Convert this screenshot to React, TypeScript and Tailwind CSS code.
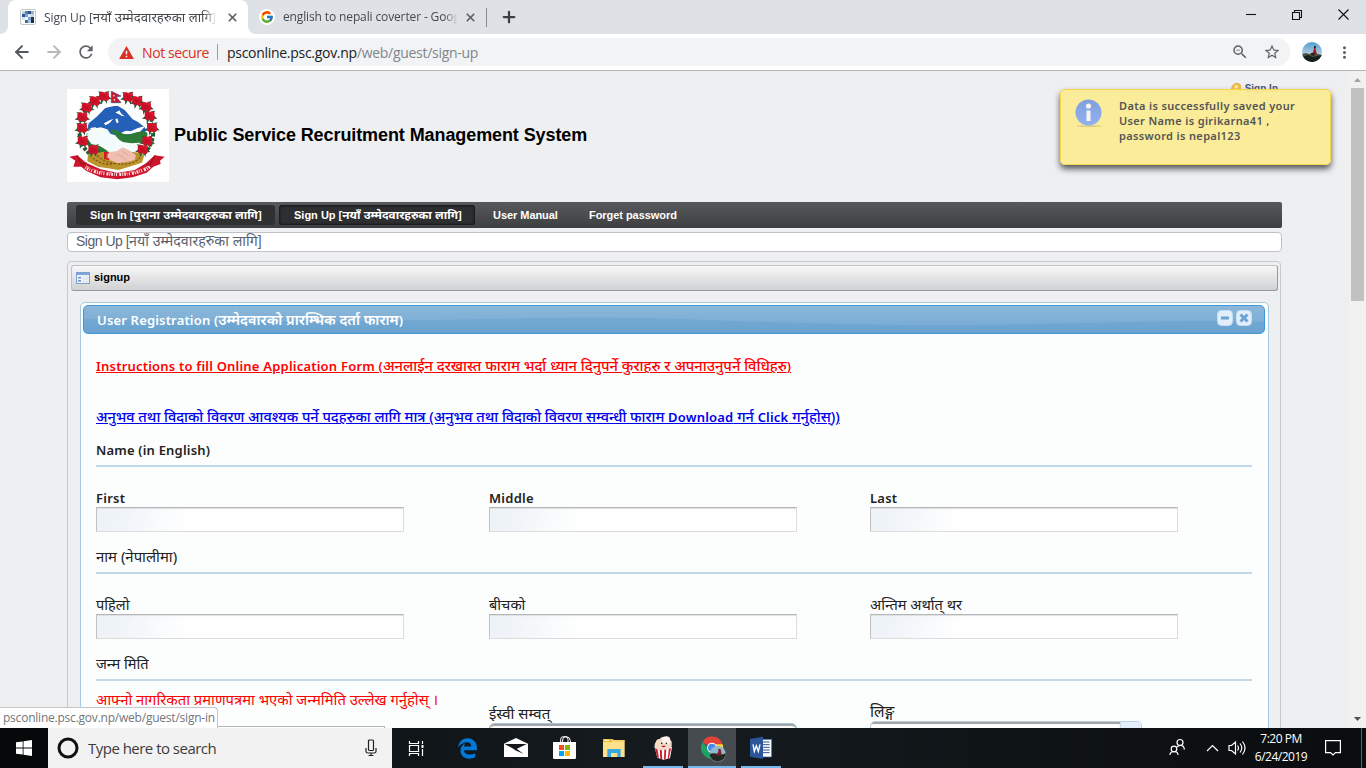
import type { ReactNode } from 'react';
import { ArrowLeft, ArrowRight, Plus, X } from 'lucide-react';
import { FcGoogle } from 'react-icons/fc';
import { FaEdgeLegacy } from 'react-icons/fa6';
import { MdRefresh, MdStarBorder, MdZoomOut, MdMoreVert } from 'react-icons/md';

const ui = "font-['Open_Sans','Noto_Sans',sans-serif]";
const arial = "font-['Liberation_Sans','Noto_Sans',sans-serif]";
const lucida = "font-['Noto_Sans','Noto_Sans_Devanagari',sans-serif]";

function Avatar({ className }: { className: string }) {
  return (
    <svg viewBox="0 0 20 20" className={className}>
      <defs>
        <linearGradient id="sky" x1="0" y1="0" x2="0" y2="1">
          <stop offset="0" stopColor="#4f9fd0" />
          <stop offset=".55" stopColor="#a9c9dc" />
        </linearGradient>
        <clipPath id="round"><circle cx="10" cy="10" r="10" /></clipPath>
      </defs>
      <g clipPath="url(#round)">
        <rect width="20" height="20" fill="url(#sky)" />
        <path d="M0 12l4-1 3 1 4-1 5 1 4 1v8H0z" fill="#4c5240" />
        <path d="M0 15l6-2 5 2 9-2v8H0z" fill="#16201f" />
        <path d="M12 5l1.500 1 .6 3 1 3-3 .5-2-1 1.500-3z" fill="#a31e2e" />
        <path d="M12 4h1.800v2H12zM9 11l4 0-1 3-3-1z" fill="#2a1d22" />
      </g>
    </svg>
  );
}

function TabStrip() {
  return (
    <div className="flex h-[34px] bg-[#dee1e6]">
      <div className="flex w-2 items-end bg-white"><div className="h-[34px] w-2 rounded-br-lg bg-[#dee1e6]" /></div>
      <div className="flex h-[34px] w-[240px] items-center rounded-t-lg bg-white pl-3">
        <svg viewBox="0 0 16 16" className="size-4 shrink-0">
          <rect x=".5" y=".5" width="15" height="15" rx="1.5" fill="#fff" stroke="#c4c6c9" />
          <path d="M2 2h3v3H2z" fill="#bcd0e4" /><path d="M5 2h3v3H5z" fill="#4d80b4" /><path d="M8 2h3v3H8z" fill="#275282" /><path d="M11 2h3v3h-3z" fill="#8fb3d5" />
          <path d="M2 5h3v3H2z" fill="#275a90" /><path d="M5 5h3v3H5z" fill="#7aa5cf" /><path d="M8 5h3v3H8z" fill="#dce8f3" /><path d="M11 5h3v3h-3z" fill="#c3d6e9" />
          <path d="M2 8h3v3H2z" fill="#d4e2ef" /><path d="M5 8h3v3H5z" fill="#eef4f9" /><path d="M8 8h3v3H8z" fill="#78a3cb" /><path d="M11 8h3v3h-3z" fill="#24384f" />
          <path d="M5 11h3v3H5z" fill="#3c6ea3" /><path d="M8 11h3v3H8z" fill="#a8c4de" /><path d="M11 11h3v3h-3z" fill="#1d2b3c" />
        </svg>
        <span className={`${ui} ml-2 w-[173px] shrink-0 mask-r-from-92% text-[12px] leading-5 tracking-[-0.1px] whitespace-nowrap text-[#45494d]`}>Sign Up [<span className="text-[13.200px] tracking-normal">नयाँ उम्मेदवारहरुका लागि</span>]</span>
        <X className="ml-[9px] size-[13px] shrink-0 text-[#5f6368]" strokeWidth={3.2} />
      </div>
      <div className="flex w-2 bg-white"><div className="h-[34px] w-2 rounded-bl-lg bg-[#dee1e6]" /></div>
      <div className="flex items-center pl-[3px]">
        <div className="flex size-4 items-center justify-center rounded-full bg-white"><FcGoogle size={14} /></div>
        <span className={`${ui} ml-2 w-[175px] shrink-0 mask-r-from-92% text-[12px] leading-5 tracking-[-0.13px] whitespace-nowrap text-[#45494d]`}>english to nepali coverter - Goog</span>
        <X className="ml-[6px] size-[13px] text-[#5f6368]" strokeWidth={3.2} />
        <div className="ml-[9px] h-[19px] w-px bg-[#878b90]" />
        <Plus className="ml-[13px] size-[18px] text-[#3c4043]" strokeWidth={3} />
      </div>
      <svg viewBox="0 0 120 34" className="ml-auto mr-[8px] h-[34px] w-[120px]" fill="none" stroke="#111" strokeWidth="1.1">
        <path d="M8 14.500h10" />
        <path d="M54.500 12.500h7v7h-7zM56.500 12.500v-2h7v7h-2" />
        <path d="M100.500 9.500l10 10M110.500 9.500l-10 10" />
      </svg>
    </div>
  );
}

function Toolbar() {
  return (
    <div className="flex h-[37px] items-center border-b border-[#b6b4b6] bg-white pl-[12px]">
      <ArrowLeft className="size-5 text-[#55595e]" strokeWidth={2.4} />
      <ArrowRight className="ml-[12px] size-5 text-[#b8babc]" strokeWidth={2.4} />
      <MdRefresh className="ml-[12px] size-5 text-[#5f6368]" />
      <div className={`${ui} ml-[12px] flex h-7 w-[1182px] items-center rounded-full bg-[#f1f3f4] pl-[11px] text-[14px]`}>
        <svg viewBox="0 0 16 14" className="h-[13px] w-[15px]">
          <path d="M8 0l8 14H0z" fill="#d93025" />
          <path d="M7.200 5h1.600v4H7.200zM7.200 10.500h1.600V12H7.200z" fill="#fff" />
        </svg>
        <span className="ml-[8px] w-[67px] whitespace-nowrap tracking-[-0.4px] text-[#d93025]">Not secure</span>
        <span className="ml-[8px] h-4 w-px bg-[#9a9da1]" />
        <span className="ml-[9px] whitespace-nowrap tracking-[-0.29px] text-[#202124]">psconline.psc.gov.np<span className="text-[#80868b]">/web/guest/sign-up</span></span>
        <MdZoomOut className="ml-auto size-[18px] text-[#5f6368]" />
        <MdStarBorder className="mr-[9px] ml-[14px] size-[18px] text-[#5f6368]" />
      </div>
      <Avatar className="ml-[12px] size-5" />
      <MdMoreVert className="ml-[13px] size-[19px] text-[#5f6368]" />
    </div>
  );
}

const flowers = [
  [132, 48], [104, 62], [80, 81], [67, 110], [66, 143], [68, 182], [100, 208],
  [204, 50], [232, 62], [258, 79], [269, 107], [276, 142], [262, 182], [248, 207],
];

function Emblem() {
  return (
    <svg viewBox="21 27 306 279" className="h-[93px] w-[102px] shrink-0">
      <rect x="21" y="27" width="306" height="279" fill="#fff" />
      <path d="M138 46Q76 66 62 126t28 96M198 46q64 22 78 80t-26 96" fill="none" stroke="#1f5a35" strokeWidth="12" strokeDasharray="10 5" />
      <path d="M82 148l4-18 24-20 26-26 26-6 12 0 20 12 24 28 16 8 20 16 6 10-26 18-52 2-46-14-40-8z" fill="#245fb8" />
      <path d="M132 130l14-8 14-6-12 14-12 6zM166 98l12-7 6 10 10 8-10-2-8-5zM166 118l6-3 4 12-6 3zM184 158l14-6 14 2 22-10 22-6-20 22-28 2-20 2zM90 144l16-2 10 6-20 4z" fill="#fff" />
      <path d="M148 148l22 2 14 10 22 4 26-8 18-2 12 4 0 34-26 16-30-8-30-22z" fill="#2d7a38" />
      <path d="M80 160l10 0 26 36 34 16-20 8-32-6-20-24z" fill="#2d7a38" />
      <path d="M84 152l16-6 22-4 20 6 10 14 14 4 6 12 16 8 26 4 24-2 16 4 0 12-18 14-26-4-36 8-26-6-28-18-26-6-14-20z" fill="#f4fcfb" />
      <path d="M84 222l36-6 100 0 34 6-8 26-70 22-62-10-32-16z" fill="#b9952a" />
      <path d="M98 234q34 26 66 16M240 232q-24 28-76 18M112 226q20 22 48 22M228 226q-20 22-58 22" stroke="#8e5a1c" strokeWidth="4" strokeDasharray="7 4" fill="none" />
      <path d="M144 216l26-2 18-12 22 10 18 14-4 14-22 6-30 4-16-8-12-2z" fill="#f0bfb2" />
      <path d="M168 222l18 8 14 12M186 214l20 12" stroke="#cf9a8e" strokeWidth="2" fill="none" />
      <path d="M132 216h14v5h-6v14h8v6l-16-4z" fill="#d01b2a" />
      {flowers.map(([x, y]) => (
        <g key={`${x}-${y}`}>
          <path d={`M${x - 23} ${y + 9}l12-10 8 12zM${x + 23} ${y + 9}l-12-12-8 14zM${x - 8} ${y + 25}l-2-18 10 4zM${x + 9} ${y + 24}l0-18-9 4zM${x - 18} ${y - 14}l14 2-6 8zM${x + 17} ${y - 15}l-12 2 4 9z`} fill="#23613a" />
          <circle cx={x - 6} cy={y - 4} r="9" fill="#d3122a" />
          <circle cx={x + 7} cy={y - 5} r="8" fill="#da1a30" />
          <circle cx={x - 7} cy={y + 5} r="8" fill="#cb1028" />
          <circle cx={x + 6} cy={y + 6} r="9" fill="#d3122a" />
          <path d={`M${x - 7} ${y - 4}l7 4 6-5M${x - 5} ${y + 7}l6-4 5 5`} stroke="#8b101d" strokeWidth="1.500" fill="none" />
        </g>
      ))}
      <path d="M154 34l29 14-14 3 14 17h-29z" fill="#cf1832" stroke="#21477f" strokeWidth="2" />
      <path d="M159 44l6 3-4 3zM160 58l6 0-3 5z" fill="#fff" />
      <path d="M28 230l24-4 26 22 44 20 50 10 52-8 34-20 26-24 30 4-14 12 2 10-22 8-20 18-42 14-46 6-50-6-44-20-14-12-24 0 6-18z" fill="#cc152b" />
      <path d="M52 226l12 28 16-6M284 226l-14 30-12-6" fill="none" stroke="#85101e" strokeWidth="2.500" />
      <path d="M76 262q28 20 96 22 68-2 98-24" fill="none" stroke="#ffe6e6" strokeWidth="9" strokeDasharray="3 3 5 3 2 4 3 6 6 3" />
      <path d="M78 257q28 20 94 21 68-2 96-22" fill="none" stroke="#ffe6e6" strokeWidth="1.500" strokeDasharray="16 6" />
    </svg>
  );
}

function Header() {
  return (
    <div className="flex h-[131px] pt-[18px]">
      <Emblem />
      <h1 className={`${arial} mt-[34px] ml-[5px] text-[18px] font-bold leading-6 tracking-[-0.09px] text-black`}>Public Service Recruitment Management System</h1>
      <a className={`${arial} -mt-[10px] mr-[4px] ml-auto flex h-5 items-center gap-[4px] self-start text-[10px] font-bold leading-4 text-[#4b567d]`}>
        <svg viewBox="0 0 14 14" className="size-[15px]">
          <path d="M.5 13.500l.5-3.500 4.500-4a4.600 4.600 0 1 1 4 4.500l-4 1-1 2z" fill="#f3c34c" stroke="#d9a03c" strokeWidth=".8" />
          <circle cx="9.500" cy="4.500" r="1.500" fill="#fff0b8" />
        </svg>
        <span className="border-b border-dotted border-gray-500">Sign In</span>
      </a>
    </div>
  );
}

function Nav() {
  return (
    <nav className={`${arial} flex h-[26px] items-center rounded-[2px] bg-linear-to-b from-[#58595c] to-[#3e3f41] pl-[9px] text-[11px] font-bold text-white`}>
      <a className="flex h-5 w-[199px] items-center rounded-[3px] bg-[#2f3032] pl-[14px] leading-5 whitespace-nowrap"><span>Sign In [<span className="text-[11.800px]">पुराना उम्मेदवारहरुका लागि</span>]</span></a>
      <a className="ml-1 flex h-5 w-[196px] items-center rounded-[3px] bg-[#2d2e30] pl-[15px] leading-5 whitespace-nowrap shadow-[inset_0_0_3px_#000]"><span>Sign Up [<span className="text-[11.750px]">नयाँ उम्मेदवारहरुका लागि</span>]</span></a>
      <a className="ml-[18px] w-[96px] tracking-[-0.05px]">User Manual</a>
      <a className="tracking-[-0.05px]">Forget password</a>
    </nav>
  );
}

function Field({ label, latin }: { label: string; latin?: boolean }) {
  return (
    <label className="flex flex-col">
      <span className={latin ? 'h-[18px] text-[13px] font-semibold leading-[18px] tracking-[0.25px]' : 'h-[18px] text-[14.600px] leading-4 whitespace-nowrap'}>{label}</span>
      <input className="h-[25px] w-[308px] border border-[#dcdcdd] border-t-[#b5b5b8] border-l-[#c2c2c5] bg-linear-100 from-[#eef3f8] from-5% to-white to-30% shadow-[inset_0_2px_1px_-1px_#dedfe1]" />
    </label>
  );
}

function Columns({ children }: { children: ReactNode }) {
  return <div className="grid grid-cols-[393px_381px_1fr]">{children}</div>;
}

function Legend({ children, className }: { children: ReactNode; className: string }) {
  return <div className={`${className} border-b-2 border-[#c3d9ea]`}>{children}</div>;
}

function PanelButton({ d }: { d: string }) {
  return (
    <svg viewBox="0 0 16 16" className="size-4">
      <rect x=".5" y=".5" width="15" height="15" rx="4" fill="#e2eefa" stroke="#c5dff5" />
      <path d={d} stroke="#69a4d6" strokeWidth="3" fill="none" />
    </svg>
  );
}

function RegistrationPanel() {
  return (
    <section className={`${lucida} mt-[11px] mr-[11px] ml-[12px] h-[430px] rounded-t-[5px] border border-[#a6c9e2] bg-[#fcfdfd] p-[2px] pr-[3px] text-[#222]`}>
      <header className="relative flex h-[29px] items-center overflow-hidden rounded-[5px] border border-[#4297d7] bg-linear-to-b from-[#8cb7da] to-[#72a8d3] pr-[12px] pl-[13px]">
        <svg viewBox="0 0 1180 27" preserveAspectRatio="none" className="absolute inset-0 size-full">
          <path d="M0 13C180 18 330 14 470 12s230 8 400 7 210-6 310-3v12H0z" fill="#5c9ccc" opacity=".35" />
        </svg>
        <h2 className="relative text-[13px] font-semibold leading-5 tracking-[0.17px] whitespace-nowrap text-white">User Registration (<span className="text-[14.400px] tracking-normal">उम्मेदवारको प्रारम्भिक दर्ता फाराम</span>)</h2>
        <div className="relative -mt-[3px] ml-auto flex gap-[3px]">
          <PanelButton d="M4 8h8" />
          <PanelButton d="M4.500 4.500l7 7M11.500 4.500l-7 7" />
        </div>
      </header>
      <div className="mr-[13px] ml-[13px] pt-[21px]">
        <a className="block h-5 text-[13px] font-semibold leading-5 tracking-[0.21px] whitespace-nowrap text-[#f00] underline">Instructions to fill Online Application Form (<span className="text-[14.700px] font-medium tracking-normal">अनलाईन दरखास्त फाराम भर्दा ध्यान दिनुपर्ने कुराहरु र अपनाउनुपर्ने विधिहरु</span>)</a>
        <a className="mt-[31px] block h-5 text-[14.500px] font-medium leading-5 whitespace-nowrap text-[#00e] underline">अनुभव तथा विदाको विवरण आवश्यक पर्ने पदहरुका लागि मात्र (अनुभव तथा विदाको विवरण सम्वन्धी फाराम <span className="text-[13px] font-semibold tracking-[0.19px]">Download</span> गर्न <span className="text-[13px] font-semibold tracking-[0.19px]">Click</span> गर्नुहोस्))</a>
        <Legend className="mt-[14px] h-[27px] text-[13px] font-semibold leading-5 tracking-[0.19px]">Name (in English)</Legend>
        <div className="mt-[22px]">
          <Columns><Field label="First" latin /><Field label="Middle" latin /><Field label="Last" latin /></Columns>
        </div>
        <Legend className="mt-[14px] h-[28px] text-[14.900px] leading-5">नाम (नेपालीमा)</Legend>
        <div className="mt-[22px]">
          <Columns><Field label="पहिलो" /><Field label="बीचको" /><Field label="अन्तिम अर्थात् थर" /></Columns>
        </div>
        <Legend className="mt-[14px] h-[28px] text-[14.600px] leading-5">जन्म मिति</Legend>
        <Columns>
          <div className="pt-[8px]">
            <div className="text-[14.800px] leading-5 whitespace-nowrap text-[#f00]">आफ्नो नागरिकता प्रमाणपत्रमा भएको जन्ममिति उल्लेख गर्नुहोस् ।</div>
            <div className="mt-[17px] h-6 w-[289px] border border-[#b5b5b8] bg-white" />
          </div>
          <div className="pt-[22px]">
            <div className="h-5 text-[15px] leading-5">ईस्वी सम्वत्</div>
            <div className="h-6 w-[308px] rounded-[5px] border border-[#a8c4da] bg-white shadow-[inset_0_2px_1px_#a0a0a3]" />
          </div>
          <div className="pt-[20px]">
            <div className="h-5 text-[15.500px] leading-5">लिङ्ग</div>
            <div className="flex h-6 w-[272px] overflow-hidden rounded-[5px] border border-[#b9cfe3] bg-white">
              <div className="w-[250px] border-r border-[#c5dbec] shadow-[inset_0_2px_1px_#a0a0a3]" />
              <div className="flex-1 bg-[#e4effa]" />
            </div>
          </div>
        </Columns>
      </div>
    </section>
  );
}

function Toast() {
  return (
    <div className={`${lucida} absolute top-[18px] right-[18px] flex h-[76px] w-[271px] rounded-[5px] border border-[#f8d64a] bg-[#faeb92]/95 pt-[8px] pl-[13px] shadow-[0_4px_6px_#55575c]`}>
      <svg viewBox="0 0 30 30" className="size-[30px]">
        <defs><linearGradient id="info" x1="0" y1="0" x2="0" y2="1"><stop offset="0" stopColor="#7fa0df" /><stop offset="1" stopColor="#91b0f0" /></linearGradient></defs>
        <ellipse cx="15" cy="28" rx="13" ry="1" fill="#dccf8a" />
        <circle cx="14.500" cy="14.500" r="13" fill="url(#info)" />
        <circle cx="14.500" cy="8" r="2.600" fill="#f7f6ee" />
        <path d="M12.500 12.500h4V23h-4z" fill="#f7f6ee" />
      </svg>
      <p className="ml-[15px] text-[11px] font-semibold leading-[15px] tracking-[0.35px] whitespace-nowrap text-[#555]">
        Data is successfully saved your<br />User Name is girikarna41 ,<br />password is nepal123
      </p>
    </div>
  );
}

function Page() {
  return (
    <div className="flex h-[657px] overflow-hidden">
      <main className="relative h-[657px] w-[1349px] overflow-hidden bg-[#eeeff1] pr-[67px] pl-[67px]">
        <Header />
        <Nav />
        <div className={`${arial} mt-1 h-5 rounded-[4px] border border-[#c0c2c5] bg-white pl-2 text-[14px] leading-[17px] text-[#5a606c]`}><span className="tracking-[-0.5px]">Sign Up [</span><span className="text-[14.200px]">नयाँ उम्मेदवारहरुका लागि</span>]</div>
        <div className="mt-[9px] mr-px h-[480px] rounded-t-[4px] border border-[#c8c9cc]">
          <div className={`${arial} mx-[3px] mt-[3px] mr-[2px] flex h-[26px] items-center rounded-[3px] border border-[#c0c2c5] border-r-[#999] border-b-[#999] bg-linear-to-b from-[#f8f8f9] to-[#d0d1d2] pl-1 text-[11px] font-bold text-black`}>
            <svg viewBox="0 0 14 12" className="mr-1 h-3 w-[14px]">
              <rect x=".5" y=".5" width="13" height="11" fill="#eef2f7" stroke="#7fa0cf" />
              <path d="M1 1h12v2H1z" fill="#7ea6e0" />
              <path d="M2 5h3v1.500H2zM2 8h3v1.500H2z" fill="#6f94c9" /><path d="M7 5h5v1.500H7zM7 8h5v1.500H7z" fill="#fff" stroke="#bcc5d0" strokeWidth=".4" />
            </svg>
            <span className="pb-[2px]">signup</span>
          </div>
          <RegistrationPanel />
        </div>
        <Toast />
        <div className={`${ui} absolute bottom-0 left-0 h-[21px] w-[218px] rounded-tr-[4px] border-t border-r border-[#c3c5c8] bg-white pl-[3px] text-[12px] leading-5 tracking-[-0.22px] whitespace-nowrap text-[#72767b]`}>psconline.psc.gov.np/web/guest/sign-in</div>
      </main>
      <div className="flex w-[17px] flex-col items-center bg-[#f1f1f1]">
        <svg viewBox="0 0 17 17" className="size-[17px]"><path d="M5 11l3.500-4 3.500 4z" fill="#a3a3a3" /></svg>
        <div className="mr-[1px] h-[213px] w-[13px] bg-[#c1c1c1]" />
        <svg viewBox="0 0 17 17" className="mt-auto size-[17px]"><path d="M5 6l3.500 4L12 6z" fill="#505050" /></svg>
      </div>
    </div>
  );
}

function Slot({ view, state, children }: { view: string; state?: 'open' | 'active'; children: ReactNode }) {
  return (
    <div className={`flex h-10 w-12 flex-col items-center ${state === 'active' ? 'bg-[#464b4f]' : ''}`}>
      <svg viewBox={view} className="h-[38px] w-12">{children}</svg>
      {state && <div className={state === 'active' ? 'h-[2px] w-12 bg-[#76b9ed]' : 'h-[2px] w-10 bg-[#76b9ed]'} />}
    </div>
  );
}

function Taskbar() {
  return (
    <div className="flex h-10 bg-linear-to-r from-[#0a0e10] via-[#151b1f] to-[#0a0d0f]">
      <div className="flex w-12 items-center justify-center bg-[#06090a]">
        <svg viewBox="0 0 16 16" className="size-4" fill="#fff"><path d="M0 2.300l6.700-.9v6.100H0zM7.500 1.300L16 0v7.500H7.500zM0 8.400h6.700v6.200L0 13.700zM7.500 8.400H16V16l-8.500-1.200z" /></svg>
      </div>
      <div className="flex w-[344px] items-center bg-[#f2f2f2] pl-[9px]">
        <svg viewBox="0 0 22 22" className="size-[22px]"><circle cx="11" cy="11" r="9" fill="none" stroke="#111" strokeWidth="3" /></svg>
        <span className={`${ui} ml-[9px] text-[15px] tracking-[-0.52px] text-[#3c3c3c]`}>Type here to search</span>
        <svg viewBox="0 0 12 18" className="mr-[15px] ml-auto h-[18px] w-3" fill="none" stroke="#222" strokeWidth="1.2"><rect x="3.500" y="1" width="5" height="10.500" rx="1" /><path d="M1 9v3.500q0 1.500 2 1.500h6q2 0 2-1.500V9M6 14v2.500M3.500 16.500h5" /></svg>
      </div>
      <div className="flex w-12 items-center justify-center">
        <svg viewBox="0 0 17 17" className="size-[17px]" fill="none" stroke="#fff" strokeWidth="1.2"><path d="M1.500 1v2.500h9V1M1.500 16v-2.500h9V16M1.500 5.500h9v6h-9zM14.500 1v3M14.500 9v7" /><path d="M13.500 5h2v3h-2z" fill="#fff" stroke="none" /></svg>
      </div>
      <div className="ml-[3px] flex gap-px">
        <div className="flex w-12 items-center justify-center"><FaEdgeLegacy className="size-[21px] text-[#0078d7]" /></div>
        <Slot view="96 144 144 114">
          <path d="M132 191l36-17 36 17v40h-72z" fill="#fff" /><path d="M134 192h66l-35 17z" fill="#12181c" /><path d="M170 206l20 15-28-12z" fill="#12181c" />
        </Slot>
        <Slot view="243 144 144 114">
          <path d="M279 186h69v47q0 4-4 4h-61q-4 0-4-4z" fill="#fff" /><path d="M302 186v-8q0-8 8-8h6q8 0 8 8v8M308 186v-6q0-10 10-10 12 0 13 12v4" fill="none" stroke="#fff" strokeWidth="3" />
          <path d="M297 195h15v15h-15z" fill="#f25022" /><path d="M315 195h15v15h-15z" fill="#7fba00" /><path d="M297 213h15v15h-15z" fill="#00a4ef" /><path d="M315 213h15v15h-15z" fill="#ffb900" />
        </Slot>
        <Slot view="390 144 144 114">
          <path d="M429 177h28l4 3h33v51h-65z" fill="#ffe08a" /><path d="M429 177h28v9h-28z" fill="#efb92e" /><path d="M433 179h14v4h-14z" fill="#fff6cf" /><path d="M463 180h30v5h-30z" fill="#f7cd5e" />
          <path d="M442 207h40v24h-10v-12h-19v12h-11z" fill="#38a8e0" />
        </Slot>
        <Slot view="537 144 144 114" state="open">
          <path d="M584 202l52-1-6 34-20 4-18-6z" fill="#fff" /><path d="M585 204h7l5 30-6-3zM599 206h6l2 32-6-2zM613 206h6l-2 32h-5zM627 204h6l-6 31-4 2z" fill="#c8202f" />
          <path d="M584 204q-2-14 5-18 0-10 10-9 6-9 16-6 12-2 14 8 8 3 6 12 2 8-3 14-10 5-20 4-14 3-28-5z" fill="#f3dccb" /><circle cx="619" cy="181" r="12" fill="#fff4ed" /><circle cx="594" cy="188" r="7" fill="#f6e1bd" /><circle cx="605" cy="190" r="2.500" fill="#222" /><circle cx="619" cy="190" r="2.500" fill="#222" /><path d="M604 197q7 9 14 0z" fill="#b81830" />
        </Slot>
        <Slot view="684 144 144 114" state="active">
          <path d="M756 203L727 187a33 33 0 0 1 61 7h-32z" fill="#e34336" /><path d="M727 187a33 33 0 0 0 26 49l15-27-12-6-10 2z" fill="#1da462" /><path d="M788 193a33 33 0 0 1-35 43l16-28-2-15z" fill="#fdd037" />
          <circle cx="756" cy="203" r="15" fill="#fff" /><circle cx="756" cy="203" r="12" fill="#4889f4" />
          <circle cx="773" cy="222" r="24" fill="#8fb9cd" /><path d="M749 222q12-4 24 0t24-2a24 24 0 0 1-48 2z" fill="#20281f" /><path d="M775 206l7 2 3 16-12 3-5-3 7-8z" fill="#7d1d2a" />
        </Slot>
        <Slot view="831 144 144 114" state="open">
          <path d="M905 178h30v53h-30z" fill="#fff" stroke="#2b579a" strokeWidth="2" /><path d="M908 186h21M908 194h21M908 202h21M908 210h21M908 218h21" stroke="#2b579a" strokeWidth="3" /><path d="M870 177l39-7v67l-39-7z" fill="#2b579a" />
          <path d="M879 193l4 21 6-17 6 17 5-21" stroke="#fff" strokeWidth="4" fill="none" />
        </Slot>
      </div>
      <div className="ml-auto flex items-center">
        <svg viewBox="-14 0 100 40" className="h-10 w-[100px]" fill="none" stroke="#fff" strokeWidth="1.2">
          <circle cx="18" cy="14.500" r="3" /><circle cx="12" cy="21" r="2.800" /><path d="M8 27q0-3.500 4-3.500t4 3.500M15 19q3-3 6.500-.500l1 3" />
          <path d="M45 23l5.500-5.500L56 23" />
          <path d="M67 17.500h2.500l4-3.500v12l-4-3.500H67zM75.500 17.500q2 2.500 0 5M78 15.500q3.500 4.500 0 9M80.500 13.500q5 6.500 0 13" />
        </svg>
        <div className={`${ui} flex w-[66px] flex-col items-center text-[12px] leading-[18px] tracking-[-0.5px] text-white`}><span>7:20 PM</span><span>6/24/2019</span></div>
        <svg viewBox="0 0 16 16" className="ml-[11px] size-4" fill="none" stroke="#fff" strokeWidth="1.200"><path d="M.6.6h14.800v12H10.500L8 15l-2.500-2.400H.6z" /></svg>
        <div className="ml-[20px] h-10 w-px bg-[#5f6365]" /><div className="w-1" />
      </div>
    </div>
  );
}

export default function App() {
  return (
    <div className="h-[768px] w-[1366px] overflow-hidden">
      <TabStrip />
      <Toolbar />
      <Page />
      <Taskbar />
    </div>
  );
}
